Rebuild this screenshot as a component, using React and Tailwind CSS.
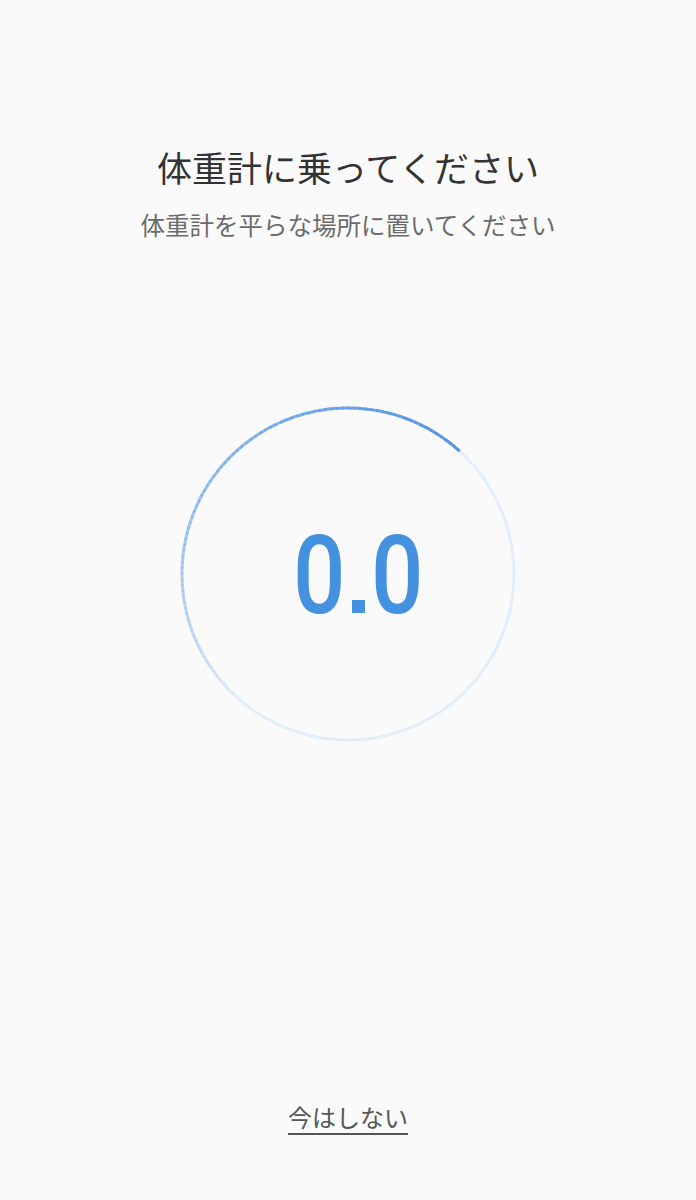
import React from "react";

const CX = 170;
const CY = 170;
const R = 166;

function pt(deg) {
  const a = ((deg - 90) * Math.PI) / 180;
  return [CX + R * Math.cos(a), CY + R * Math.sin(a)];
}

function ProgressRing() {
  // comet-like arc: tail fades in from bottom-left, head at ~1 o'clock
  const start = 222;
  const end = 402;
  const steps = 90;
  const segs = [];
  for (let i = 0; i < steps; i++) {
    const a0 = start + ((end - start) * i) / steps;
    const a1 = start + ((end - start) * (i + 1)) / steps + 0.3;
    const [x0, y0] = pt(a0);
    const [x1, y1] = pt(a1);
    const t = (i + 1) / steps;
    segs.push(
      <path
        key={i}
        d={`M ${x0} ${y0} A ${R} ${R} 0 0 1 ${x1} ${y1}`}
        stroke="#4a90e2"
        strokeOpacity={Math.pow(t, 0.8) * 0.95}
        strokeWidth="3"
        fill="none"
      />
    );
  }
  return (
    <svg width="340" height="340" viewBox="0 0 340 340">
      <circle cx={CX} cy={CY} r={R} stroke="#e4eefa" strokeWidth="3" fill="none" />
      {segs}
    </svg>
  );
}

function Digit({ value }) {
  return (
    <div className="w-[45px] flex justify-center">
      <span
        className="inline-block text-[110px] leading-none font-medium scale-x-[0.84]"
        style={{ fontFamily: "Roboto, sans-serif" }}
      >
        {value}
      </span>
    </div>
  );
}

export default function App() {
  return (
    <div
      className="min-h-[1200px] w-full bg-[#fafafa] flex flex-col items-center"
      style={{ fontFamily: '"Noto Sans CJK JP", "Noto Sans", sans-serif' }}
    >
      <h1 className="pt-[143px] text-[35px] leading-[48px] text-[#333333] font-normal">
        体重計に乗ってください
      </h1>
      <p className="mt-[18px] text-[24.5px] leading-[32px] text-[#6b6b6b]">
        体重計を平らな場所に置いてください
      </p>

      <div className="mt-[163px] relative w-[340px] h-[340px]">
        <ProgressRing />
        <div className="absolute inset-0 flex items-center justify-center">
          <div className="flex items-baseline text-[#4491e0] pl-[20px] pt-[4px]">
            <Digit value="0" />
            <div className="w-[13px] h-[13px] mx-[10px] bg-[#4491e0]" />
            <Digit value="0" />
          </div>
        </div>
      </div>

      <button className="mt-[357px] text-[24px] leading-[32px] text-[#555555] underline underline-offset-[6px] decoration-[2px]">
        今はしない
      </button>
    </div>
  );
}
